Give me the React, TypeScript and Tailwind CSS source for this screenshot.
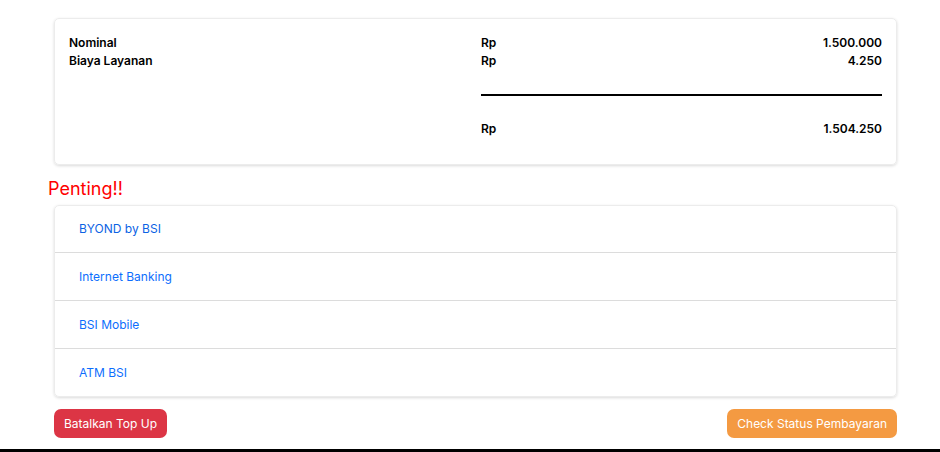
import React from 'react';

const methods = ['BYOND by BSI', 'Internet Banking', 'BSI Mobile', 'ATM BSI'];

export default function App() {
  return (
    <div className="w-[940px] h-[452px] bg-white flex flex-col font-['Inter',sans-serif] overflow-hidden">
      <div className="flex-1 pl-[54px] pr-[43px] pt-[18px]">
        {/* ringkasan */}
        <div className="rounded-[5px] border border-[#ececec] shadow-[0_1px_3px_rgba(0,0,0,0.15)] px-[14px] pt-[15px] pb-[26px] text-[12px] font-semibold text-black leading-[18px]">
          <div className="grid grid-cols-[412px_1fr]">
            <div>
              <div>Nominal</div>
              <div>Biaya Layanan</div>
            </div>
            <div>
              <div className="flex justify-between"><span>Rp</span><span>1.500.000</span></div>
              <div className="flex justify-between"><span>Rp</span><span>4.250</span></div>
              <div className="h-[2px] bg-black mt-[24px] mb-[24px]" />
              <div className="flex justify-between"><span>Rp</span><span>1.504.250</span></div>
            </div>
          </div>
        </div>

        <div className="-ml-[6px] mt-[10px] text-[18px] leading-[27px] text-[#ff0000]">Penting!!</div>

        <div className="mt-[3px] rounded-[5px] border border-[#ececec] shadow-[0_1px_3px_rgba(0,0,0,0.15)] overflow-hidden">
          {methods.map((m, i) => (
            <div
              key={m}
              className={`flex items-center pl-[24px] text-[12px] ${i > 0 ? 'h-[48px] border-t border-[#dcdcdc] text-[#0d6efd]' : 'h-[46px] text-[#0c63e4]'}`}
            >
              {m}
            </div>
          ))}
        </div>

        <div className="mt-[12px] flex justify-between">
          <button className="h-[29px] px-[10px] rounded-[7px] bg-[#dc3545] text-white text-[12px]">Batalkan Top Up</button>
          <button className="h-[29px] px-[10px] rounded-[7px] bg-[#f49a42] text-white text-[12px]">Check Status Pembayaran</button>
        </div>
      </div>
      <div className="h-[3px] bg-black" />
    </div>
  );
}
